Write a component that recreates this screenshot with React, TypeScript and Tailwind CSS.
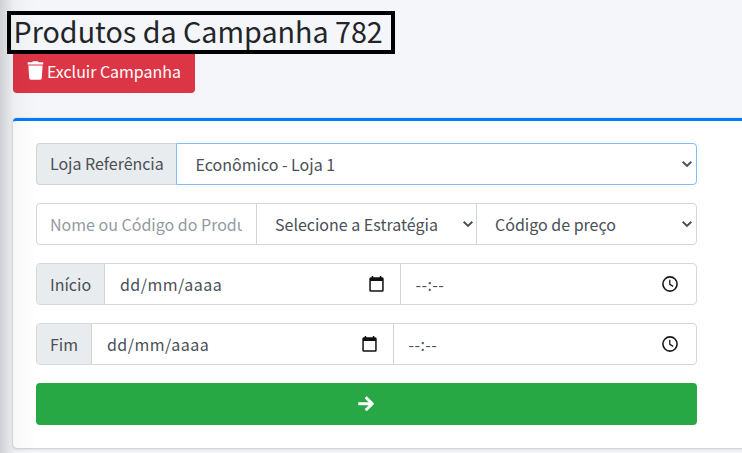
import type { ReactNode } from "react";

function Chevron() {
  return (
    <svg className="h-[8px] w-[10px] shrink-0" viewBox="0 0 10 8" fill="none" stroke="#495057" strokeWidth="2">
      <path d="M0.7 1.8 5 5.9 9.3 1.8" />
    </svg>
  );
}

function Calendar() {
  return (
    <svg className="h-[16px] w-[15px] shrink-0" viewBox="0 0 15 16" fill="#101010">
      <path
        fillRule="evenodd"
        d="M2.7 0h1.5v1.3h6.6V0h1.5v1.3h.9A1.5 1.5 0 0 1 14.7 2.8v11.4a1.5 1.5 0 0 1-1.5 1.5H1.8a1.5 1.5 0 0 1-1.5-1.5V2.8a1.5 1.5 0 0 1 1.5-1.5h.9zM1.8 4.9v9.3h11.4V4.9z"
      />
    </svg>
  );
}

function Clock() {
  return (
    <svg className="h-[16px] w-[16px] shrink-0" viewBox="0 0 16 16" fill="none" stroke="#181818" strokeWidth="1.6">
      <circle cx="8" cy="8" r="7.1" />
      <path d="M7.8 3.8v4.6l3.4 2" strokeWidth="1.3" />
    </svg>
  );
}

function Row({ children }: { children: ReactNode }) {
  return <div className="flex h-[42px] w-[661px] overflow-hidden rounded-[4px] border border-[#d3d8de] bg-white">{children}</div>;
}

function DateRow({ label, labelWidth, dateWidth }: { label: string; labelWidth: string; dateWidth: string }) {
  return (
    <Row>
      <div className={`${labelWidth} shrink-0 border-r border-[#ced4da] bg-[#e9ecef] pl-[13px] leading-[40px]`}>{label}</div>
      <div className={`${dateWidth} flex shrink-0 items-center justify-between border-r border-[#ced4da] pr-[16px] pl-[15px]`}>
        <span className="tracking-[0.45px]">dd/mm/aaaa</span>
        <Calendar />
      </div>
      <div className="flex grow items-center justify-between pr-[18px] pl-[14.5px]">
        <span className="tracking-[0.4px]">--:--</span>
        <Clock />
      </div>
    </Row>
  );
}

export default function App() {
  return (
    <div className="relative h-[453px] w-[742px] overflow-hidden bg-[#f4f6f9] pl-[13px] font-['Noto_Sans_CJK_SC',sans-serif] text-[16px] text-[#495057]">
      <h1 className="h-[53px] pt-[10px] pl-[0.5px] text-[28.7px] leading-[42px] whitespace-nowrap text-[#212529]">Produtos da Campanha 782</h1>
      <button className="flex h-[40px] w-[182px] items-start rounded-b-[4px] bg-[#dc3545] pt-[8px] pl-[14px] text-white">
        <svg className="h-[19px] w-[17px] shrink-0" viewBox="0 0 17 19" fill="currentColor">
          <path d="M.7 1.3h4.5L5.8.2h5.1l.6 1.1h4.7v2.3H.7zM1.4 4.6h14.2l-.8 12.5a1.8 1.8 0 0 1-1.8 1.7H4a1.8 1.8 0 0 1-1.8-1.7z" />
        </svg>
        <span className="pl-[3px] leading-[20px] tracking-[-0.03px] whitespace-nowrap">Excluir Campanha</span>
      </button>

      <div className="mt-[25px] flex h-[330px] w-[760px] flex-col gap-[18px] rounded-[4px] border-t-[3px] border-[#007bff] bg-white pt-[22px] pl-[23px] shadow-[0_0_1px_rgba(0,0,0,0.2),0_1px_3px_rgba(0,0,0,0.18)]">
        <div className="flex h-[42px] w-[661px]">
          <div className="w-[140px] rounded-l-[4px] border border-r-0 border-[#ced4da] bg-[#e9ecef] pl-[13px] leading-[39px] tracking-[-0.03px] whitespace-nowrap">Loja Referência</div>
          <div className="flex grow items-center justify-between rounded-r-[4px] border border-[#80bdff] pr-[4px] pl-[18.5px]">
            <span>Econômico - Loja 1</span>
            <Chevron />
          </div>
        </div>
        <Row>
          <div className="w-[220px] shrink-0 border-r border-[#ced4da] pr-[14px] pl-[13px] text-[#939ba2]">
            <div className="overflow-hidden leading-[40px] whitespace-nowrap">Nome ou Código do Produto</div>
          </div>
          <div className="flex w-[220px] shrink-0 items-center justify-between border-r border-[#ced4da] pr-[3px] pl-[18px]">
            <span>Selecione a Estratégia</span>
            <Chevron />
          </div>
          <div className="flex grow items-center justify-between pr-[4px] pl-[18px]">
            <span>Código de preço</span>
            <Chevron />
          </div>
        </Row>
        <DateRow label="Início" labelWidth="w-[68px]" dateWidth="w-[296px]" />
        <DateRow label="Fim" labelWidth="w-[55px]" dateWidth="w-[302px]" />
        <button className="flex h-[42px] w-[661px] items-center justify-center rounded-[4px] bg-[#28a745] text-white">
          <svg className="h-[16px] w-[17px]" viewBox="0 0 17 16" fill="none" stroke="currentColor" strokeWidth="3">
            <path d="M.3 7.7h14M7.7 1.2l6.6 6.5-6.6 6.5" strokeLinejoin="round" />
          </svg>
        </button>
      </div>

      <div className="pointer-events-none absolute inset-y-0 left-0 w-[36px] bg-linear-to-r from-black/15 via-black/3 via-40% to-transparent" />
      <div className="pointer-events-none absolute top-[11px] left-[7px] h-[43px] w-[388px] border-4 border-black" />
    </div>
  );
}
